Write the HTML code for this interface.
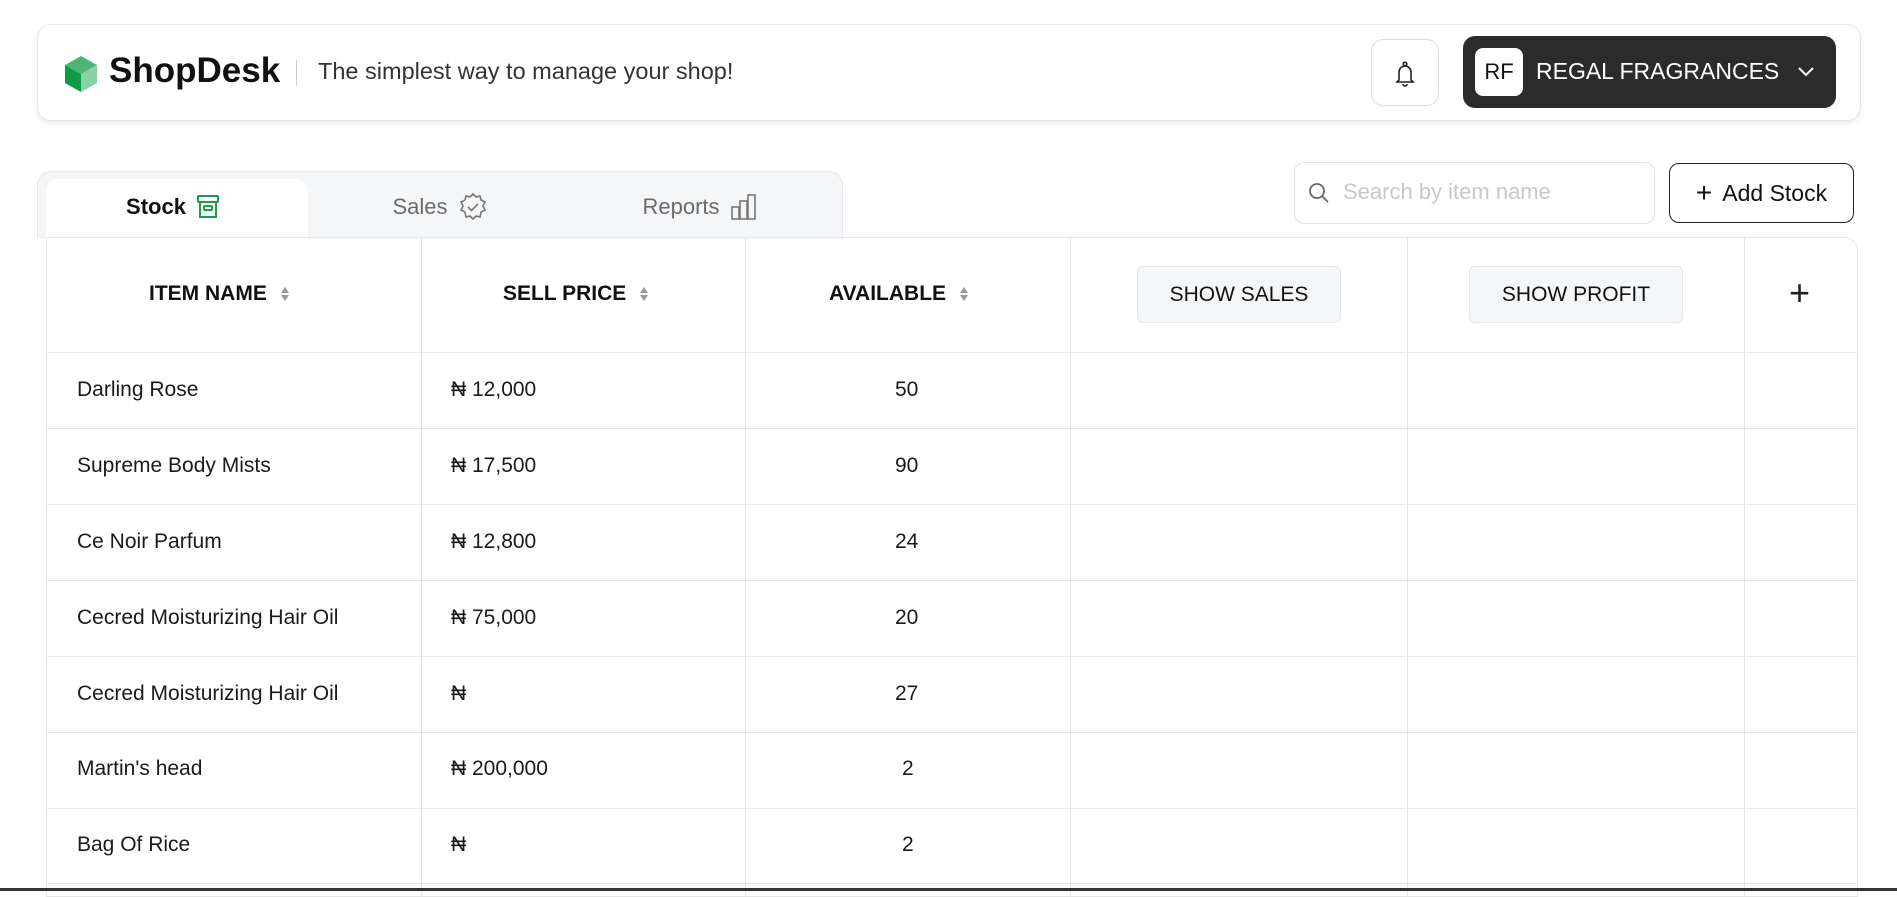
<!DOCTYPE html><html><head><meta charset="utf-8"><style>
*{box-sizing:border-box;margin:0;padding:0}
body{width:1897px;height:891px;background:#fff;font-family:"Liberation Sans",sans-serif;color:#1a1a1a;position:relative;overflow:hidden}
.abs{position:absolute}
.hdr{left:37px;top:24px;width:1824px;height:97px;border:1px solid #e6e6e6;border-radius:14px;box-shadow:0 3px 6px rgba(0,0,0,.08);background:#fff}
.tabs{left:37px;top:171px;width:806px;height:68px;background:#f5f6f8;border:1px solid #e4e6ea;border-bottom:none;border-radius:14px 14px 0 0}
.tab{position:absolute;top:8px;height:60px;display:flex;align-items:center;justify-content:center;font-size:22px;color:#6b6b6b;gap:10px}
.tbl{left:46px;top:237px;width:1812px;height:660px;border:1px solid #e6e6e6;border-radius:0 14px 0 0}
.vl{position:absolute;top:237px;width:1px;height:660px;background:#e6e6e6}
.hl{position:absolute;left:46px;width:1812px;height:1px;background:#e6e6e6}
.th{position:absolute;top:282px;font-size:21px;font-weight:bold;color:#111;display:flex;align-items:center;gap:14px}
.sort{display:inline-block;width:8px;height:16px;position:relative}
.sort:before,.sort:after{content:"";position:absolute;left:0;border-left:4px solid transparent;border-right:4px solid transparent}
.sort:before{top:1px;border-bottom:6px solid #999}
.sort:after{bottom:1px;border-top:6px solid #999}
.btn{position:absolute;top:266px;height:57px;background:#f5f6f8;border:1px solid #e4e6ea;border-radius:6px;font-size:21px;display:flex;align-items:center;justify-content:center;color:#111}
.cell{position:absolute;font-size:21px;color:#1a1a1a;line-height:24px}
</style></head><body>
<div class="abs hdr"></div>
<svg class="abs" style="left:63px;top:55px" width="36" height="38" viewBox="0 0 36 38"><polygon points="18,1 34,10 18,19 2,10" fill="#4bb57a"/><polygon points="2,10 18,19 18,37 2,28" fill="#0f9a48"/><polygon points="34,10 18,19 18,37 34,28" fill="#86d1a6"/></svg>
<div class="abs" style="left:109px;top:51px;font-size:35px;font-weight:bold;color:#111">ShopDesk</div>
<div class="abs" style="left:296px;top:60px;width:1px;height:26px;background:#ccc"></div>
<div class="abs" style="left:318px;top:58px;font-size:23.5px;color:#333">The simplest way to manage your shop!</div>
<div class="abs" style="left:1371px;top:39px;width:68px;height:67px;border:1px solid #ddd;border-radius:12px"></div>
<svg class="abs" style="left:1393px;top:61px" width="24" height="26" viewBox="0 0 24 26" fill="none" stroke="#222" stroke-width="1.6"><circle cx="12" cy="3" r="1.8"/><path d="M6 19 V11 a6 6 0 0 1 12 0 V19 L20 21 H4 Z"/><path d="M10 23 a2 2 0 0 0 4 0"/></svg>
<div class="abs" style="left:1463px;top:36px;width:373px;height:72px;background:#2b2b2b;border-radius:12px"></div>
<div class="abs" style="left:1475px;top:48px;width:48px;height:48px;background:#fff;border-radius:8px;font-size:22px;display:flex;align-items:center;justify-content:center;color:#111">RF</div>
<div class="abs" style="left:1536px;top:58px;font-size:23px;color:#fff">REGAL FRAGRANCES</div>
<svg class="abs" style="left:1796px;top:64px" width="20" height="14" viewBox="0 0 20 14" fill="none" stroke="#fff" stroke-width="2"><path d="M3 4 L10 11 L17 4"/></svg>
<div class="abs tabs"></div>
<div class="abs" style="left:46px;top:179px;width:262px;height:60px;background:#fff;border-radius:12px 12px 0 0"></div>
<div class="tab" style="left:42px;width:262px;top:177px;color:#111;font-weight:bold">Stock <svg width="24" height="26" viewBox="0 0 24 26" fill="none" stroke="#1a9c4a" stroke-width="2"><rect x="2" y="2" width="20" height="6" rx="1"/><path d="M4 8 V23 H20 V8"/><rect x="8" y="12" width="8" height="4" rx="1"/></svg></div>
<div class="tab" style="left:330px;width:220px;top:177px">Sales <svg width="30" height="30" viewBox="0 0 30 30" fill="none" stroke="#777" stroke-width="1.6"><path d="M15 2 L18 5 L22 4 L23 8 L27 10 L25 14 L27 18 L23 20 L22 25 L18 24 L15 27 L12 24 L8 25 L7 20 L3 18 L5 14 L3 10 L7 8 L8 4 L12 5 Z"/><path d="M10 15 L13.5 18.5 L20 12"/></svg></div>
<div class="tab" style="left:590px;width:220px;top:177px">Reports <svg width="28" height="28" viewBox="0 0 28 28" fill="none" stroke="#777" stroke-width="1.6"><rect x="2" y="14" width="7" height="12"/><rect x="10" y="8" width="7" height="18"/><rect x="18" y="2" width="7" height="24"/></svg></div>
<div class="abs" style="left:1294px;top:162px;width:361px;height:62px;border:1px solid #e2e2e2;border-radius:10px"></div>
<svg class="abs" style="left:1308px;top:182px" width="22" height="22" viewBox="0 0 22 22" fill="none" stroke="#666" stroke-width="1.8"><circle cx="9" cy="9" r="7"/><path d="M14 14 L20 20"/></svg>
<div class="abs" style="left:1343px;top:179px;font-size:22px;color:#c8c8c8">Search by item name</div>
<div class="abs" style="left:1669px;top:163px;width:185px;height:60px;border:1.5px solid #222;border-radius:10px;font-size:23px;display:flex;align-items:center;justify-content:center;gap:10px;color:#111"><span style="font-size:28px;font-weight:300">+</span>Add Stock</div>
<div class="abs tbl"></div>
<div class="vl" style="left:421px"></div><div class="vl" style="left:745px"></div><div class="vl" style="left:1070px"></div><div class="vl" style="left:1407px"></div><div class="vl" style="left:1744px"></div>
<div class="hl" style="top:352px"></div><div class="hl" style="top:428px"></div><div class="hl" style="top:504px"></div><div class="hl" style="top:580px"></div><div class="hl" style="top:656px"></div><div class="hl" style="top:732px"></div><div class="hl" style="top:808px"></div><div class="hl" style="top:883px"></div>
<div class="th" style="left:149px">ITEM NAME <span class="sort"></span></div>
<div class="th" style="left:503px">SELL PRICE <span class="sort"></span></div>
<div class="th" style="left:829px">AVAILABLE <span class="sort"></span></div>
<div class="btn" style="left:1137px;width:204px">SHOW SALES</div>
<div class="btn" style="left:1469px;width:214px">SHOW PROFIT</div>
<div class="abs" style="left:1789px;top:272px;font-size:36px;color:#222">+</div>
<div class="cell" style="left:77px;top:378px">Darling Rose</div><div class="cell" style="left:451px;top:378px">₦ 12,000</div><div class="cell" style="left:895px;top:378px">50</div>
<div class="cell" style="left:77px;top:454px">Supreme Body Mists</div><div class="cell" style="left:451px;top:454px">₦ 17,500</div><div class="cell" style="left:895px;top:454px">90</div>
<div class="cell" style="left:77px;top:530px">Ce Noir Parfum</div><div class="cell" style="left:451px;top:530px">₦ 12,800</div><div class="cell" style="left:895px;top:530px">24</div>
<div class="cell" style="left:77px;top:606px">Cecred Moisturizing Hair Oil</div><div class="cell" style="left:451px;top:606px">₦ 75,000</div><div class="cell" style="left:895px;top:606px">20</div>
<div class="cell" style="left:77px;top:682px">Cecred Moisturizing Hair Oil</div><div class="cell" style="left:451px;top:682px">₦</div><div class="cell" style="left:895px;top:682px">27</div>
<div class="cell" style="left:77px;top:757px">Martin's head</div><div class="cell" style="left:451px;top:757px">₦ 200,000</div><div class="cell" style="left:902px;top:757px">2</div>
<div class="cell" style="left:77px;top:833px">Bag Of Rice</div><div class="cell" style="left:451px;top:833px">₦</div><div class="cell" style="left:902px;top:833px">2</div>
<div class="abs" style="left:0;top:888px;width:1897px;height:3px;background:#333"></div>
</body></html>
